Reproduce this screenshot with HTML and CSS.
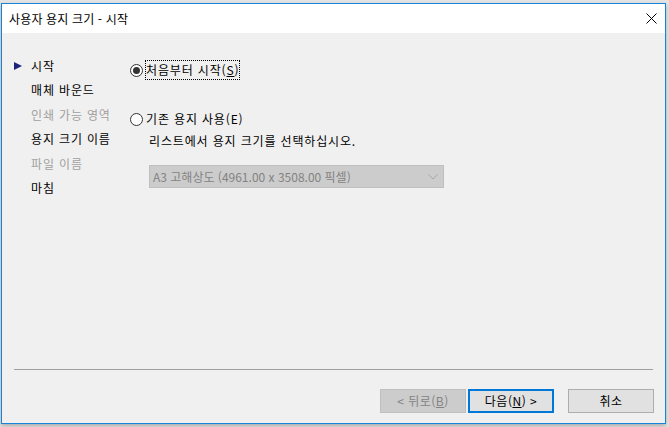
FILE: index.html
```html
<!DOCTYPE html>
<html lang="ko">
<head>
<meta charset="utf-8">
<link rel="stylesheet" href="styles.css">
</head>
<body>
<div class="window">
  <div class="titlebar">
    <span class="title">사용자 용지 크기 - 시작</span>
    <svg class="close" width="11" height="11" viewBox="0 0 11 11"><path d="M0.5 0.5L10.5 10.5M10.5 0.5L0.5 10.5" stroke="#000" stroke-width="1" fill="none"/></svg>
  </div>
  <div class="main">
    <ul class="nav">
      <li class="current"><span class="arrow"></span>시작</li>
      <li>매체 바운드</li>
      <li class="disabled">인쇄 가능 영역</li>
      <li>용지 크기 이름</li>
      <li class="disabled">파일 이름</li>
      <li>마침</li>
    </ul>
    <div class="panel">
      <div class="radio-row">
        <span class="radio checked"></span>
        <span class="label focus">처음부터 시작(<u>S</u>)</span>
      </div>
      <div class="radio-row second">
        <span class="radio"></span>
        <span class="label">기존 용지 사용(E)</span>
      </div>
      <div class="hint">리스트에서 용지 크기를 선택하십시오.</div>
      <div class="combo">
        <span>A3 고해상도 (4961.00 x 3508.00 픽셀)</span>
        <svg class="chev" width="10" height="6" viewBox="0 0 10 6"><path d="M0.5 0.5L5 5L9.5 0.5" stroke="#a6a6a6" stroke-width="1" fill="none"/></svg>
      </div>
    </div>
  </div>
  <div class="sep"></div>
  <div class="footer">
    <button class="btn disabled">&lt; 뒤로(<u>B</u>)</button>
    <button class="btn default">다음(<u>N</u>) &gt;</button>
    <button class="btn cancel">취소</button>
  </div>
</div>
</body>
</html>
```
FILE: styles.css
```css
html, body {
  margin: 0;
  padding: 0;
}
body {
  width: 669px;
  height: 427px;
  overflow: hidden;
  background: #e4e4e4;
  font-family: "Noto Sans CJK KR", "Noto Sans", sans-serif;
  font-size: 12px;
  color: #000;
}
.window {
  margin: 3px 0 0 1px;
  width: 665px;
  height: 421px;
  box-sizing: border-box;
  border: 1px solid #1883d7;
  background: #f0f0f0;
  box-shadow: 0 2px 4px rgba(0,0,0,0.25);
  display: flex;
  flex-direction: column;
}
.titlebar {
  height: 29px;
  flex: none;
  background: #fff;
  display: flex;
  align-items: center;
  padding: 0 8px 0 7px;
}
.title {
  line-height: 16px;
  letter-spacing: 0.15px;
}
.close {
  margin-left: auto;
  display: block;
}
.main {
  height: 336px;
  flex: none;
  display: flex;
}
.nav {
  list-style: none;
  margin: 0;
  padding: 21px 0 0 12px;
  width: 128px;
  box-sizing: border-box;
}
.nav li {
  height: 24.4px;
  line-height: 24.4px;
  padding-left: 17px;
  position: relative;
  white-space: nowrap;
  letter-spacing: 0.85px;
}
.nav li.disabled {
  color: #a0a0a0;
}
.arrow {
  position: absolute;
  left: 0;
  top: 8px;
  width: 0;
  height: 0;
  border-top: 4px solid transparent;
  border-bottom: 4px solid transparent;
  border-left: 8px solid #1a237e;
}
.panel {
  padding-top: 27px;
  display: flex;
  flex-direction: column;
  align-items: flex-start;
}
.radio-row {
  display: flex;
  align-items: center;
  height: 20px;
}
.radio-row.second {
  margin-top: 29px;
}
.radio {
  width: 13px;
  height: 13px;
  box-sizing: border-box;
  border: 1px solid #333;
  border-radius: 50%;
  background: #fff;
  position: relative;
  margin-right: 2px;
}
.radio.checked::after {
  content: "";
  position: absolute;
  left: 2px;
  top: 2px;
  width: 7px;
  height: 7px;
  border-radius: 50%;
  background: #333;
}
.label {
  line-height: 18px;
  padding: 0 0 0 0;
  border: 1px solid transparent;
  white-space: nowrap;
  letter-spacing: 0.85px;
}
.label.focus {
  border: 1px dotted #000;
}
.hint {
  margin: 2px 0 0 19px;
  line-height: 20px;
  white-space: nowrap;
  letter-spacing: 0.85px;
}
.combo {
  margin: 14px 0 0 19px;
  width: 295px;
  height: 23px;
  box-sizing: border-box;
  border: 1px solid #bfbfbf;
  background: #cccccc;
  color: #838383;
  display: flex;
  align-items: center;
  padding: 0 5px 0 3px;
  white-space: nowrap;
}
.chev {
  margin-left: auto;
  display: block;
}
.sep {
  height: 1px;
  background: #a0a0a0;
  margin: 0 12px;
  flex: none;
}
.footer {
  display: flex;
  justify-content: flex-end;
  padding: 19px 11px 0 0;
}
.btn {
  width: 86px;
  height: 24px;
  box-sizing: border-box;
  border: 1px solid #adadad;
  background: #e1e1e1;
  font-family: inherit;
  font-size: 12px;
  color: #000;
  padding: 0;
  line-height: 20px;
  letter-spacing: 0.5px;
}
.btn.disabled {
  border-color: #bfbfbf;
  background: #cccccc;
  color: #838383;
}
.btn.default {
  margin-left: 2px;
  border: 2px solid #0078d7;
}
.btn.cancel {
  margin-left: 14px;
}
```
